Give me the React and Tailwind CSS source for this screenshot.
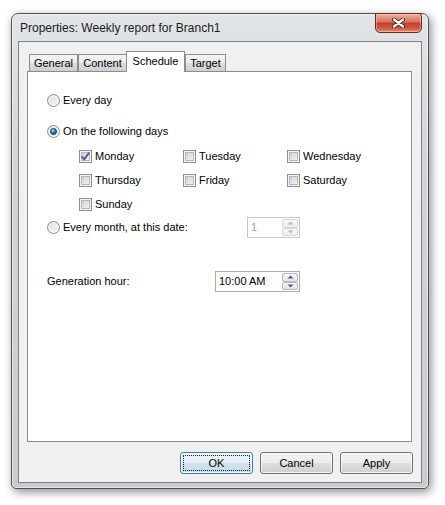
import React from "react"

const font = "font-['Liberation_Sans',Arial,sans-serif]"

function Radio({ checked }) {
  return (
    <svg width="13" height="13" viewBox="0 0 13 13" className="shrink-0">
      <defs>
        <linearGradient id="radioFill" x1="0" y1="0" x2="1" y2="1">
          <stop offset="0" stopColor="#d9d9d9" />
          <stop offset="1" stopColor="#fbfbfb" />
        </linearGradient>
        <radialGradient id="radioDot" cx="0.4" cy="0.35" r="0.75">
          <stop offset="0" stopColor="#a4e6ff" />
          <stop offset="0.45" stopColor="#1f8bc7" />
          <stop offset="1" stopColor="#0a3150" />
        </radialGradient>
      </defs>
      <circle cx="6.5" cy="6.5" r="6" fill="url(#radioFill)" stroke="#8a8c8e" />
      <circle cx="6.5" cy="6.5" r="4.6" fill="none" stroke="#ffffff" strokeOpacity="0.7" />
      {checked && <circle cx="6.5" cy="6.5" r="3.1" fill="url(#radioDot)" stroke="#163a55" strokeWidth="0.8" />}
    </svg>
  )
}

function Checkbox({ checked }) {
  return (
    <svg width="13" height="13" viewBox="0 0 13 13" className="shrink-0">
      <defs>
        <linearGradient id="checkFill" x1="0" y1="0" x2="1" y2="1">
          <stop offset="0" stopColor="#cbcfd5" />
          <stop offset="1" stopColor="#f7f7f7" />
        </linearGradient>
      </defs>
      <rect x="0.5" y="0.5" width="12" height="12" fill="#f4f4f4" stroke="#8e8f8f" />
      <rect x="2.5" y="2.5" width="8" height="8" fill="url(#checkFill)" stroke="#b4b8bd" />
      {checked && (
        <path d="M2.8 6.4 L5.2 9.4 L10.2 2.6" fill="none" stroke="#4b5f93" strokeWidth="1.9" strokeLinejoin="round" />
      )}
    </svg>
  )
}

function Arrow({ up, disabled }) {
  return (
    <svg width="7" height="4" viewBox="0 0 7 4">
      <path d={up ? "M0.5 3.5 L3.5 0.5 L6.5 3.5 Z" : "M0.5 0.5 L3.5 3.5 L6.5 0.5 Z"} fill={disabled ? "#b8bcc2" : "#4e5d78"} />
    </svg>
  )
}

function SpinButton({ up, disabled }) {
  return (
    <div
      className={`flex flex-1 items-center justify-center rounded-[2px] border ${
        disabled
          ? "border-[#d6d6d6] bg-[linear-gradient(#f8f8f8,#eeeeee)]"
          : "border-[#b6b9bd] bg-[linear-gradient(#f6f6f6,#e2e4e7)]"
      }`}
    >
      <Arrow up={up} disabled={disabled} />
    </div>
  )
}

function Spin({ value, disabled, width }) {
  return (
    <div className={`flex h-[21px] border bg-white ${disabled ? "border-[#c6c8ca]" : "border-[#abadb3]"} ${width}`}>
      <div className={`flex flex-1 items-center pl-[3px] ${disabled ? "text-[#a3a3a3]" : "text-black"}`}>{value}</div>
      <div className="flex w-[17px] flex-col pb-px pr-px pt-px">
        <SpinButton up disabled={disabled} />
        <SpinButton disabled={disabled} />
      </div>
    </div>
  )
}

function Choice({ label, checked, box }) {
  return (
    <div className="flex h-4 items-center gap-[3px]">
      {box ? <Checkbox checked={checked} /> : <Radio checked={checked} />}
      <span className="leading-none">{label}</span>
    </div>
  )
}

function Button({ children, focused }) {
  return (
    <button
      className={`flex h-[22px] w-[73px] items-center justify-center rounded-[3px] border p-[2px] shadow-[inset_0_0_0_1px_rgba(255,255,255,0.7)] ${
        focused
          ? "border-[#3c7fb1] bg-[linear-gradient(#eef6fb,#e4eef5_50%,#d3e2ed_50%,#c6d9e7)]"
          : "border-[#707070] bg-[linear-gradient(#f2f2f2,#ebebeb_50%,#dddddd_50%,#cfcfcf)]"
      }`}
    >
      <span
        className={`flex h-full w-full items-center justify-center rounded-[1px] ${
          focused ? "border border-dotted border-[#202020]" : "border border-transparent"
        }`}
      >
        {children}
      </span>
    </button>
  )
}

const tabs = ["General", "Content", "Schedule", "Target"]
const tabWidths = { General: "w-[49px]", Content: "w-[49px]", Schedule: "w-[59px]", Target: "w-[41px]" }

const days = ["Monday", "Tuesday", "Wednesday", "Thursday", "Friday", "Saturday", "Sunday"]

export default function App() {
  return (
    <div className={`min-h-[505px] w-[445px] bg-white pl-[11px] pt-[13px] text-[11px] text-black ${font}`}>
      {/* Window frame */}
      <div className="relative flex h-[476px] w-[418px] flex-col rounded-t-[7px] rounded-b-[5px] border border-[#4f5255] bg-[linear-gradient(to_bottom,#e2e5e8,#d2d5d9_30%,#c8cbcf)] px-[6px] pb-[5px] shadow-[2px_3px_10px_rgba(0,0,0,0.45),inset_0_0_0_1px_rgba(255,255,255,0.55)]">
        {/* Title bar */}
        <div className="flex h-[27px] items-center pl-[2px] pt-px text-[12px] text-[#1b1b1b]">
          Properties: Weekly report for Branch1
        </div>
        <div className="absolute right-[6px] top-[-1px] flex h-[20px] w-[47px] items-center justify-center rounded-b-[5px] rounded-tr-[3px] border border-[#6b2a20] bg-[linear-gradient(to_bottom,#eab0a1,#d8765e_42%,#c2412a_52%,#cf5c40_80%,#e4967d)] shadow-[inset_0_0_0_1px_rgba(255,220,210,0.45)]">
          <svg width="13" height="10" viewBox="0 0 13 10">
            <path d="M2 1.5 L11 8.5 M11 1.5 L2 8.5" stroke="#4a1a12" strokeWidth="4" strokeLinecap="round" />
            <path d="M2 1.5 L11 8.5 M11 1.5 L2 8.5" stroke="#ffffff" strokeWidth="2.3" strokeLinecap="round" />
          </svg>
        </div>

        {/* Client area */}
        <div className="flex flex-1 flex-col border border-[#7d8084] bg-[#f0f0f0] pb-[8px] pl-[8px] pr-[9px] pt-[9px]">
          {/* Tabs */}
          <div className="flex h-[20px] items-end pl-[2px]">
            {tabs.map((t) =>
              t === "Schedule" ? (
                <div
                  key={t}
                  className={`relative z-10 -mb-px -ml-px flex h-[21px] ${tabWidths[t]} items-start justify-center border border-b-0 border-[#898c95] bg-white pt-[1px]`}
                >
                  {t}
                </div>
              ) : (
                <div
                  key={t}
                  className={`flex h-[17px] ${tabWidths[t]} items-center justify-center border border-b-0 border-[#898c95] bg-[linear-gradient(#f3f3f3,#ebebeb_50%,#dddddd_50%,#cfcfcf)] pt-px`}
                >
                  {t}
                </div>
              )
            )}
          </div>

          {/* Tab panel */}
          <div className="flex h-[371px] flex-col border border-[#898c95] bg-white pl-[19px] pt-[20px]">
            <Choice label="Every day" />
            <div className="mt-[15px]">
              <Choice label="On the following days" checked />
            </div>
            <div className="ml-[32px] mt-[9px] grid grid-cols-[104px_104px_104px] gap-y-[8px]">
              {days.map((d) => (
                <Choice key={d} label={d} box checked={d === "Monday"} />
              ))}
            </div>
            <div className="mt-[5px] flex h-[21px] w-[253px] items-center justify-between">
              <Choice label="Every month, at this date:" />
              <Spin value="1" disabled width="w-[53px]" />
            </div>
            <div className="mt-[33px] flex h-[21px] w-[253px] items-center justify-between">
              <span>Generation hour:</span>
              <Spin value="10:00 AM" width="w-[85px]" />
            </div>
          </div>

          {/* Buttons */}
          <div className="-mr-px mt-[10px] flex justify-end gap-[7px]">
            <Button focused>OK</Button>
            <Button>Cancel</Button>
            <Button>Apply</Button>
          </div>
        </div>
      </div>
    </div>
  )
}
